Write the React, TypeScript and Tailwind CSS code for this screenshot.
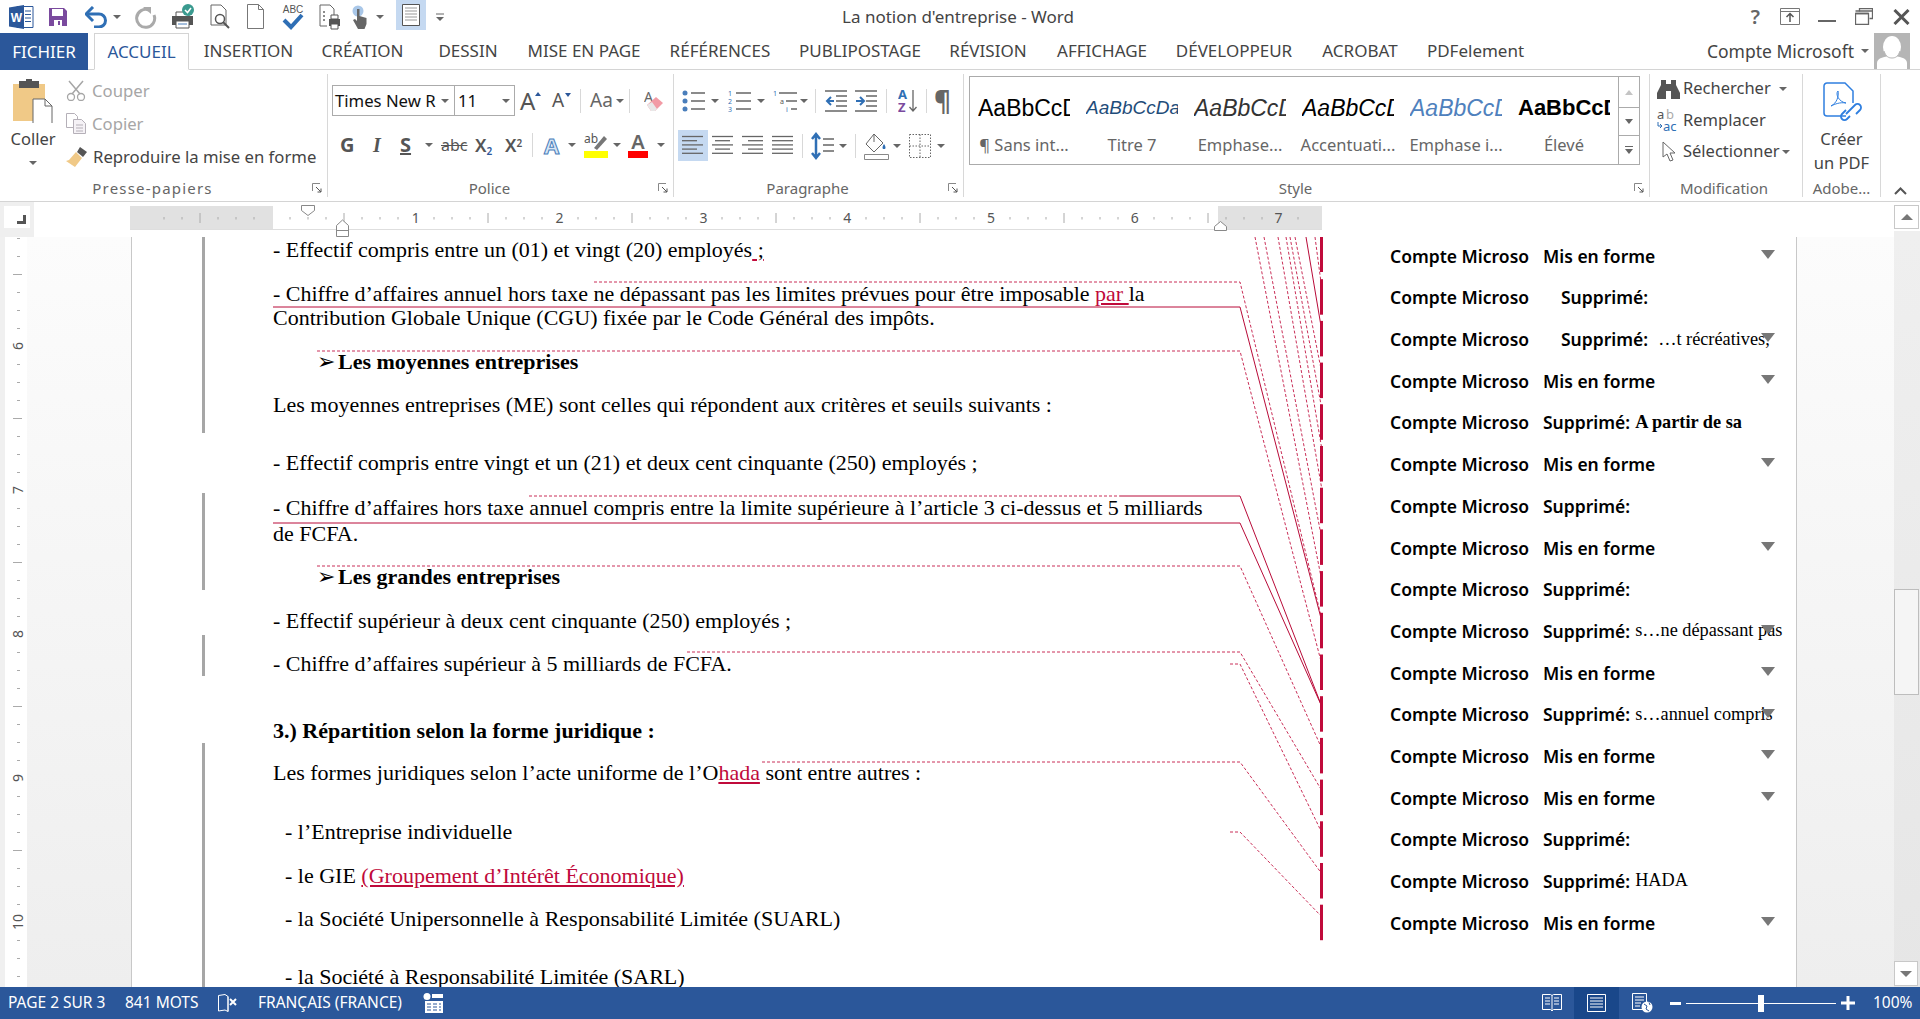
import type { ReactNode } from "react";

const RED = "#c00a3b";

function Caret({ className = "" }: { className?: string }) {
	return <span className={`inline-block w-0 h-0 border-x-[4px] border-t-[4px] border-x-transparent border-t-[#666] ${className}`} />;
}

function Launcher() {
	return (
		<svg width="11" height="11" viewBox="0 0 11 11" className="justify-self-end">
			<path d="M.5 8V.5H8" fill="none" stroke="#888" />
			<path d="M4 4l5 5M9 5.5V9H5.5" fill="none" stroke="#555" />
		</svg>
	);
}

function GroupLabel({ text, launcher = true, cls = "" }: { text: string; launcher?: boolean; cls?: string }) {
	return (
		<div className="grid grid-cols-[1fr_auto_1fr] items-center h-[24px] pb-[2px] text-[15px] text-[#666] pr-[4px]">
			<span />
			<span className={`${launcher ? "mr-[18px]" : ""} ${cls}`}>{text}</span>
			{launcher ? <Launcher /> : <span />}
		</div>
	);
}

function Sep() {
	return <div className="w-px shrink-0 my-[4px] bg-[#d8d8d8]" />;
}

function MiniSep({ className = "" }: { className?: string }) {
	return <div className={`w-px h-[24px] bg-[#d8d8d8] ${className}`} />;
}

function AlignIcon({ lines }: { lines: [number, number][] }) {
	return (
		<svg width="22" height="24" viewBox="0 0 22 24">
			{lines.map(([a, b], i) => (
				<path key={i} d={`M${a} ${2.5 + i * 4.2}H${b}`} stroke="#666" strokeWidth="1.3" />
			))}
		</svg>
	);
}

function QuickAccess() {
	return (
		<div className="flex items-center h-[33px]">
			<svg width="25" height="26" viewBox="0 0 25 26" className="ml-[9px]">
				<path d="M8 2.5h16v21H8z" fill="#fff" stroke="#2b579a" />
				<path d="M16 7h6M16 10.5h6M16 14h6M16 17.5h6" stroke="#2b579a" />
				<path d="M0 3.5 15 1v24L0 22.5z" fill="#2b579a" />
				<text x="7.5" y="17.5" fontSize="12" fontWeight="700" fill="#fff" textAnchor="middle" fontFamily="Liberation Sans">W</text>
			</svg>
			<svg width="20" height="20" viewBox="0 0 20 20" className="ml-[14px]">
				<path d="M1 1h15l3 3v15H1z" fill="#7a4a9e" />
				<path d="M4 2h11v7H4z" fill="#fff" />
				<path d="M6 13h8v6H6z" fill="#fff" />
				<path d="M10 14h2v4h-2z" fill="#7a4a9e" />
			</svg>
			<svg width="23" height="22" viewBox="0 0 23 22" className="ml-[17px]">
				<path d="M3 8h11a6.5 6.5 0 0 1 0 13h-5" fill="none" stroke="#2f6fb5" strokeWidth="3" />
				<path d="M8 1 1 8l7 7" fill="none" stroke="#2f6fb5" strokeWidth="3" />
			</svg>
			<Caret className="ml-[5px]" />
			<svg width="22" height="24" viewBox="0 0 22 24" className="ml-[14px]">
				<path d="M14 5a9 9 0 1 0 5 5" fill="none" stroke="#aaa" strokeWidth="3" />
				<path d="M8 2h8v7z" fill="#aaa" />
			</svg>
			<svg width="24" height="26" viewBox="0 0 24 26" className="ml-[14px]">
				<path d="M5 8h13v6H5z" fill="#fff" stroke="#555" />
				<path d="M1 12h21v9H1z" fill="#555" />
				<path d="M5 17h13v7H5z" fill="#fff" stroke="#555" />
				<path d="M7 20h9" stroke="#4a7ebb" />
				<circle cx="17" cy="6" r="6" fill="#3a9a8f" />
				<path d="M14 6l2.500 2.500L20 4" fill="none" stroke="#fff" strokeWidth="1.500" />
			</svg>
			<svg width="21" height="26" viewBox="0 0 21 26" className="ml-[15px]">
				<path d="M1 1h10l5 5v15H1z" fill="#fff" stroke="#666" />
				<circle cx="10" cy="15" r="4.500" fill="#fff" stroke="#555" strokeWidth="1.500" />
				<path d="M13 18l6 6" stroke="#555" strokeWidth="2" />
			</svg>
			<svg width="17" height="25" viewBox="0 0 17 25" className="ml-[16px]">
				<path d="M.5.5h11l5 5v19H.500z" fill="#fff" stroke="#777" />
				<path d="M11.500.5v5h5" fill="none" stroke="#777" />
			</svg>
			<svg width="22" height="26" viewBox="0 0 22 26" className="ml-[18px]">
				<text x="11" y="9" fontSize="10" fill="#555" textAnchor="middle" fontFamily="Liberation Sans">ABC</text>
				<path d="M2 16l7 7L20 11" fill="none" stroke="#2f6fb5" strokeWidth="4" />
			</svg>
			<svg width="23" height="26" viewBox="0 0 23 26" className="ml-[15px]">
				<path d="M1 1h10l4 4v8M1 1v21h7" fill="#fff" stroke="#666" />
				<path d="M4 8h2M4 12h2M4 16h2" stroke="#666" strokeWidth="1.500" />
				<path d="M10 15h11v7H10z" fill="#555" />
				<path d="M12 11h7v4h-7zM12 20h7v5h-7z" fill="#fff" stroke="#555" />
			</svg>
			<svg width="18" height="26" viewBox="0 0 18 26" className="ml-[10px]">
				<circle cx="6" cy="7" r="5.500" fill="#a9c7e8" />
				<path d="M5 5h2.500v7l7 2v6l-2 5H6l-5-9 2-1 2 2z" fill="#666" />
			</svg>
			<Caret className="ml-[6px]" />
			<div className="self-start ml-[12px] w-[30px] h-[30px] bg-[#c5d9f1] flex items-center justify-center">
				<svg width="18" height="22" viewBox="0 0 18 22">
					<path d="M.5.5h17v21H.5z" fill="#fff" stroke="#555" />
					<path d="M3 4h12M3 7h12M3 10h12M3 13h12M3 16h12" stroke="#999" />
				</svg>
			</div>
			<svg width="8" height="8" viewBox="0 0 8 8" className="ml-[10px]">
				<path d="M0 1h8" stroke="#666" />
				<path d="M0 4h8L4 8z" fill="#666" />
			</svg>
		</div>
	);
}

function WindowControls() {
	return (
		<div className="flex items-center justify-end h-[33px] pr-[10px]">
			<span className="text-[20px] font-semibold text-[#666] mr-[20px] leading-none">?</span>
			<svg width="20" height="17" viewBox="0 0 20 17" className="mr-[18px]">
				<path d="M.5.5h19v16H.5zM.5 3.500h19" fill="none" stroke="#777" />
				<path d="M10 14V6M6.500 9 10 5.500 13.500 9" fill="none" stroke="#555" strokeWidth="1.500" />
			</svg>
			<div className="w-[18px] h-[2px] bg-[#666] mt-[8px] mr-[19px]" />
			<svg width="18" height="17" viewBox="0 0 18 17" className="mr-[20px]">
				<path d="M4.500 3.500V.5h13v10h-3" fill="none" stroke="#666" strokeWidth="1.300" />
				<path d="M.5 5.500h13v11H.5z" fill="#fff" stroke="#666" strokeWidth="1.300" />
				<path d="M.5 3h17M.5 5.500h13" stroke="#666" strokeWidth="1.300" />
			</svg>
			<svg width="17" height="16" viewBox="0 0 17 16">
				<path d="M1.500 1l14 14M15.500 1l-14 14" stroke="#555" strokeWidth="3" />
			</svg>
		</div>
	);
}

function TabRow() {
	return (
		<div className="flex h-[37px] border-b border-[#d4d4d4] text-[17px] text-[#444] relative">
			<div className="w-[88px] h-[37px] bg-[#2b579a] text-white flex items-center justify-center shrink-0">FICHIER</div>
			<div className="ml-[6px] w-[95px] h-[37px] border border-b-white border-[#d4d4d4] bg-white text-[#2b579a] flex items-center justify-center shrink-0">ACCUEIL</div>
			<div className="w-[119px] flex items-center justify-center">INSERTION</div>
			<div className="w-[109px] flex items-center justify-center">CRÉATION</div>
			<div className="w-[102px] flex items-center justify-center">DESSIN</div>
			<div className="w-[130px] flex items-center justify-center whitespace-nowrap">MISE EN PAGE</div>
			<div className="w-[142px] flex items-center justify-center">RÉFÉRENCES</div>
			<div className="w-[138px] flex items-center justify-center">PUBLIPOSTAGE</div>
			<div className="w-[118px] flex items-center justify-center">RÉVISION</div>
			<div className="w-[110px] flex items-center justify-center">AFFICHAGE</div>
			<div className="w-[154px] flex items-center justify-center">DÉVELOPPEUR</div>
			<div className="w-[98px] flex items-center justify-center">ACROBAT</div>
			<div className="w-[133px] flex items-center justify-center">PDFelement</div>
			<div className="flex-1 flex items-center justify-end">
				<span className="text-[17.500px] whitespace-nowrap">Compte Microsoft</span>
				<Caret className="ml-[7px]" />
				<div className="ml-[5px] mr-[10px] w-[36px] h-[36px] bg-[#b5b5b5] overflow-hidden">
					<svg width="36" height="36" viewBox="0 0 36 36">
						<ellipse cx="18" cy="14" rx="9" ry="11" fill="#fff" />
						<path d="M3 36v-6c0-5 8-7 15-7s15 2 15 7v6z" fill="#fff" />
						<path d="M10 18c2 6 5 7 8 7s6-1 8-7" fill="none" stroke="#b5b5b5" />
					</svg>
				</div>
			</div>
		</div>
	);
}

function Clipboard() {
	return (
		<div className="w-[327px] shrink-0 flex flex-col">
			<div className="flex-1 flex">
				<div className="w-[66px] flex flex-col items-center text-[16.500px] text-[#444] pt-[9px]">
					<svg width="42" height="44" viewBox="0 0 42 44">
						<path d="M1 5h32v37H1z" fill="#f0c987" />
						<path d="M7 2h20v7H7z" fill="#555" />
						<path d="M14 0h6v3h-6z" fill="#555" />
						<path d="M21 20h12l7 7v23H21z" fill="#fff" stroke="#666" />
						<path d="M33 20v7h7" fill="none" stroke="#666" />
					</svg>
					<span className="mt-[4px]">Coller</span>
					<Caret className="mt-[9px]" />
				</div>
				<div className="flex flex-col pt-[4px] text-[16.700px]">
					<div className="flex items-center h-[33px] text-[#a6a6a6]">
						<svg width="20" height="21" viewBox="0 0 20 21" className="mr-[6px]">
							<path d="M3 1l11 13M17 1 6 14" stroke="#a6a6a6" strokeWidth="1.500" />
							<circle cx="5" cy="17" r="3.500" fill="none" stroke="#a6a6a6" strokeWidth="1.300" />
							<circle cx="15" cy="17" r="3.500" fill="none" stroke="#a6a6a6" strokeWidth="1.300" />
						</svg>
						Couper
					</div>
					<div className="flex items-center h-[33px] text-[#a6a6a6]">
						<svg width="20" height="21" viewBox="0 0 20 21" className="mr-[6px]">
							<path d="M.5.5h8l3 3v11H.5z" fill="#fff" stroke="#b5b0b8" />
							<path d="M7.500 6.500h8l4 4v10h-12z" fill="#f5f2f6" stroke="#b5b0b8" />
							<path d="M10 12h7M10 15h7M10 18h7" stroke="#b5b0b8" />
						</svg>
						Copier
					</div>
					<div className="flex items-center h-[33px] text-[#444] whitespace-nowrap">
						<svg width="23" height="21" viewBox="0 0 23 21" className="mr-[4px]">
							<path d="M14 1l7 5-4 5-6-5z" fill="#555" />
							<path d="M10 6l6 6-7 9-9-6 3-1z" fill="#f0c987" />
						</svg>
						Reproduire la mise en forme
					</div>
				</div>
			</div>
			<GroupLabel text="Presse-papiers" cls="tracking-[1.200px]" />
		</div>
	);
}

function Police() {
	return (
		<div className="w-[345px] shrink-0 flex flex-col">
			<div className="flex-1 pt-[15px]">
				<div className="flex items-center h-[31px] pl-[4px]">
					<div className="w-[123px] h-[31px] border border-[#ababab] flex items-center pl-[2px] pr-[5px] justify-between text-[16.700px] text-[#111] whitespace-nowrap overflow-hidden">
						Times New R
						<Caret />
					</div>
					<div className="w-[61px] ml-[-1px] h-[31px] border border-[#ababab] flex items-center pl-[3px] pr-[4px] justify-between text-[16.700px] text-[#111]">
						11
						<Caret />
					</div>
					<span className="ml-[5px] w-[32px] text-[24px] leading-none text-[#555] relative">
						A
						<span className="absolute left-[15px] top-[3px] w-0 h-0 border-x-[3px] border-b-[4px] border-x-transparent border-b-[#2b579a]" />
					</span>
					<span className="w-[28px] text-[19px] leading-none text-[#555] relative">
						A
						<span className="absolute left-[13px] top-[2px] w-0 h-0 border-x-[3px] border-t-[4px] border-x-transparent border-t-[#2b579a]" />
					</span>
					<MiniSep />
					<span className="ml-[9px] text-[19px] text-[#666]">Aa</span>
					<Caret className="ml-[3px]" />
					<MiniSep className="ml-[5px]" />
					<svg width="20" height="22" viewBox="0 0 20 22" className="ml-[14px]">
						<text x="0" y="12" fontSize="14" fill="#666" fontFamily="Noto Sans">A</text>
						<path d="M3 15 12 7l7 6-8 8H7z" fill="#f29ba5" />
						<path d="M3 15l4 6h4l2-2-5-7z" fill="#e8e8e8" />
					</svg>
				</div>
				<div className="flex items-center h-[30px] pl-[12px] mt-[14px] text-[#555]">
					<span className="w-[32px] text-[20px] font-bold leading-none">G</span>
					<span className="w-[28px] text-[20px] font-bold italic leading-none pl-[1px] [font-family:'Liberation_Serif',serif]">I</span>
					<span className="w-[25px] text-[20px] font-bold underline leading-none">S</span>
					<Caret className="mr-[8px]" />
					<span className="w-[34px] text-[16px] line-through leading-none">abc</span>
					<span className="w-[30px] text-[18px] font-semibold leading-none">X<sub className="text-[10px] text-[#2b579a]">2</sub></span>
					<span className="w-[27px] text-[18px] font-semibold leading-none">X<sup className="text-[10px]">2</sup></span>
					<MiniSep className="mr-[11px]" />
					<span className="w-[24px] text-[22px] leading-none text-[#d7e6f5] [-webkit-text-stroke:1px_#4a7ebb] font-bold">A</span>
					<Caret className="mr-[8px]" />
					<div className="w-[24px] flex flex-col items-center">
						<svg width="24" height="18" viewBox="0 0 24 18">
							<text x="0" y="10" fontSize="12" fill="#555" fontFamily="Noto Sans">ab</text>
							<path d="M10 15l10-12 3 3-10 11z" fill="#777" />
						</svg>
						<div className="w-[24px] h-[7px] bg-[#ffff00]" />
					</div>
					<Caret className="ml-[5px] mr-[7px]" />
					<div className="w-[20px] flex flex-col items-center">
						<span className="text-[20px] font-semibold leading-[18px] text-[#666]">A</span>
						<div className="w-[20px] h-[7px] bg-[#ff0000]" />
					</div>
					<Caret className="ml-[9px]" />
				</div>
			</div>
			<GroupLabel text="Police" />
		</div>
	);
}

function Paragraph() {
	return (
		<div className="w-[289px] shrink-0 flex flex-col">
			<div className="flex-1 pt-[17px]">
				<div className="flex items-center h-[28px]">
					<svg width="24" height="24" viewBox="0 0 24 24" className="ml-[8px]">
						<circle cx="3" cy="4" r="2.500" fill="#4a7ebb" />
						<circle cx="3" cy="12" r="2.500" fill="#4a7ebb" />
						<circle cx="3" cy="20" r="2.500" fill="#4a7ebb" />
						<path d="M9 4h14M9 12h14M9 20h14" stroke="#666" strokeWidth="1.300" />
					</svg>
					<Caret className="ml-[5px]" />
					<svg width="24" height="24" viewBox="0 0 24 24" className="ml-[9px]">
						<text x="0" y="7" fontSize="7" fill="#2f6fb5" fontFamily="Noto Sans">1</text>
						<text x="0" y="15" fontSize="7" fill="#2f6fb5" fontFamily="Noto Sans">2</text>
						<text x="0" y="23" fontSize="7" fill="#2f6fb5" fontFamily="Noto Sans">3</text>
						<path d="M8 4h15M8 12h15M8 20h15" stroke="#666" strokeWidth="1.300" />
					</svg>
					<Caret className="ml-[5px]" />
					<svg width="25" height="24" viewBox="0 0 25 24" className="ml-[8px]">
						<text x="0" y="7" fontSize="7" fill="#2f6fb5" fontFamily="Noto Sans">1</text>
						<text x="7" y="15" fontSize="7" fill="#555" fontFamily="Noto Sans">a</text>
						<text x="13" y="23" fontSize="7" fill="#2f6fb5" fontFamily="Noto Sans">i</text>
						<path d="M6 4h18M13 12h11M18 20h6" stroke="#666" strokeWidth="1.300" />
					</svg>
					<Caret className="ml-[2px]" />
					<MiniSep className="ml-[7px]" />
					<svg width="23" height="24" viewBox="0 0 23 24" className="ml-[9px]">
						<path d="M0 2h22M11 7h11M11 12h11M11 17h11M0 22h22" stroke="#666" strokeWidth="1.300" />
						<path d="M9 12H2M6 8l-4 4 4 4" fill="none" stroke="#2f6fb5" strokeWidth="2" />
					</svg>
					<svg width="23" height="24" viewBox="0 0 23 24" className="ml-[7px]">
						<path d="M0 2h22M11 7h11M11 12h11M11 17h11M0 22h22" stroke="#666" strokeWidth="1.300" />
						<path d="M1 12h7M5 8l4 4-4 4" fill="none" stroke="#2f6fb5" strokeWidth="2" />
					</svg>
					<MiniSep className="ml-[8px]" />
					<svg width="20" height="26" viewBox="0 0 20 26" className="ml-[11px]">
						<text x="0" y="11" fontSize="13" fontWeight="700" fill="#2f6fb5" fontFamily="Noto Sans">A</text>
						<text x="0" y="24" fontSize="13" fontWeight="700" fill="#7a4a9e" fontFamily="Noto Sans">Z</text>
						<path d="M15 2v21M11.500 19l3.500 4 3.500-4" fill="none" stroke="#666" strokeWidth="1.300" />
					</svg>
					<MiniSep className="ml-[8px]" />
					<span className="ml-[7px] text-[26px] font-bold leading-none text-[#666]">¶</span>
				</div>
				<div className="flex items-center h-[31px] mt-[15px] pl-[4px]">
					<div className="w-[30px] h-[31px] bg-[#c5d9f1] flex items-center justify-center">
						<AlignIcon lines={[[0, 21], [0, 15], [0, 21], [0, 15], [0, 21]]} />
					</div>
					<div className="ml-[4px]"><AlignIcon lines={[[0, 21], [3, 18], [0, 21], [3, 18], [0, 21]]} /></div>
					<div className="ml-[8px]"><AlignIcon lines={[[0, 21], [6, 21], [0, 21], [6, 21], [0, 21]]} /></div>
					<div className="ml-[8px]"><AlignIcon lines={[[0, 21], [0, 21], [0, 21], [0, 21], [0, 21]]} /></div>
					<MiniSep className="ml-[8px]" />
					<svg width="24" height="28" viewBox="0 0 24 28" className="ml-[8px]">
						<path d="M5 3v22M1 7l4-5 4 5M1 21l4 5 4-5" fill="none" stroke="#2f6fb5" strokeWidth="2.500" />
						<path d="M12 7h11M12 13h11M12 19h11" stroke="#666" strokeWidth="1.300" />
					</svg>
					<Caret className="ml-[4px]" />
					<MiniSep className="ml-[8px]" />
					<svg width="25" height="28" viewBox="0 0 25 28" className="ml-[8px]">
						<path d="M10 2 2 12l8 8 9-9z" fill="#fff" stroke="#666" />
						<path d="M10 2v8" stroke="#666" />
						<path d="M20 12c-2 3-2 5 0 5s2-2 0-5z" fill="#2f6fb5" />
						<path d="M.5 22.500h24v5H.5z" fill="#fff" stroke="#888" />
					</svg>
					<Caret className="ml-[4px]" />
					<svg width="22" height="24" viewBox="0 0 22 24" className="ml-[8px]">
						<path d="M.5.5h21v23H.5zM11 .5v23M.5 12h21" fill="none" stroke="#666" strokeDasharray="1.500 1.500" />
					</svg>
					<Caret className="ml-[6px]" />
				</div>
			</div>
			<GroupLabel text="Paragraphe" />
		</div>
	);
}

function StyleCell({ sample, label, cls }: { sample: string; label: string; cls: string }) {
	return (
		<div className="w-[108px] flex flex-col items-center">
			<div className={`w-[92px] h-[30px] mt-[16px] overflow-hidden whitespace-nowrap leading-[30px] [font-family:'Liberation_Sans',sans-serif] ${cls}`}>{sample}</div>
			<div className="mt-[10px] text-[16.500px] text-[#666] whitespace-nowrap">{label}</div>
		</div>
	);
}

function Styles() {
	return (
		<div className="w-[685px] shrink-0 flex flex-col">
			<div className="flex-1 pt-[6px] pl-[5px]">
				<div className="w-[671px] h-[89px] border border-[#ababab] flex">
					<StyleCell sample="AaBbCcDc" label="¶ Sans int..." cls="text-[23px] text-black" />
					<StyleCell sample="AaBbCcDa" label="Titre 7" cls="text-[19px] italic text-[#1f4d7a] text-center" />
					<StyleCell sample="AaBbCcDc" label="Emphase..." cls="text-[23px] italic text-[#333]" />
					<StyleCell sample="AaBbCcDc" label="Accentuati..." cls="text-[23px] italic text-black" />
					<StyleCell sample="AaBbCcDc" label="Emphase i..." cls="text-[23px] italic text-[#4f81bd]" />
					<StyleCell sample="AaBbCcDc" label="Élevé" cls="text-[22px] font-bold text-black" />
					<div className="w-[21px] ml-auto flex flex-col border-l border-[#ababab] shrink-0">
						<div className="h-[31px] border-b border-[#ababab] flex items-center justify-center">
							<span className="w-0 h-0 border-x-[4px] border-b-[5px] border-x-transparent border-b-[#c4c4c4]" />
						</div>
						<div className="h-[28px] border-b border-[#ababab] flex items-center justify-center">
							<span className="w-0 h-0 border-x-[4px] border-t-[5px] border-x-transparent border-t-[#666]" />
						</div>
						<div className="flex-1 flex flex-col items-center justify-center gap-[2px]">
							<span className="w-[8px] h-px bg-[#666]" />
							<span className="w-0 h-0 border-x-[4px] border-t-[5px] border-x-transparent border-t-[#666]" />
						</div>
					</div>
				</div>
			</div>
			<GroupLabel text="Style" />
		</div>
	);
}

function Modification() {
	return (
		<div className="w-[152px] shrink-0 flex flex-col">
			<div className="flex-1 pt-[3px] pl-[7px] text-[16.500px] text-[#444]">
				<div className="flex items-center h-[31px]">
					<svg width="23" height="20" viewBox="0 0 23 20" className="mr-[3px]">
						<path d="M4 1h5v4h5V1h5v5l4 8v6h-9v-8h-5v8H0v-6l4-8z" fill="#555" />
					</svg>
					Rechercher
					<Caret className="ml-[8px]" />
				</div>
				<div className="flex items-center h-[32px]">
					<svg width="23" height="24" viewBox="0 0 23 24" className="mr-[3px]">
						<text x="0" y="11" fontSize="13" fill="#555" fontFamily="Noto Sans">a</text>
						<text x="9" y="11" fontSize="13" fill="#aaa" fontFamily="Noto Sans">b</text>
						<text x="6" y="23" fontSize="13" fill="#2f6fb5" fontFamily="Noto Sans">ac</text>
						<path d="M1 14v4h4M3 16l2 2-2 2" fill="none" stroke="#2f6fb5" />
					</svg>
					Remplacer
				</div>
				<div className="flex items-center h-[31px]">
					<svg width="18" height="22" viewBox="0 0 18 22" className="ml-[5px] mr-[3px]">
						<path d="M1 1v15l4-3 3 7 3-1-3-7h5z" fill="#fff" stroke="#666" />
					</svg>
					Sélectionner
					<Caret className="ml-[2px]" />
				</div>
			</div>
			<GroupLabel text="Modification" launcher={false} />
		</div>
	);
}

function Adobe() {
	return (
		<div className="w-[77px] shrink-0 flex flex-col items-center text-[16.500px] text-[#444]">
			<div className="flex-1 flex flex-col items-center pt-[12px]">
				<svg width="40" height="42" viewBox="0 0 40 42">
					<path d="M24 34H5a3 3 0 0 1-3-3V4a3 3 0 0 1 3-3h18l8 8v12" fill="none" stroke="#2f7fe0" strokeWidth="1.500" />
					<path d="M9 24c6-3 8-10 7-15-3 3 1 11 8 12-6-1-11 1-15 3z" fill="none" stroke="#2f7fe0" />
					<path d="M24 32l9-9a3.500 3.500 0 0 1 5 5l-4 4M28 34l-3 3a3.500 3.500 0 0 1-5-5l4-4" fill="none" stroke="#2f7fe0" strokeWidth="1.800" />
				</svg>
				<span className="mt-[3px] leading-[24px]">Créer</span>
				<span className="leading-[24px]">un PDF</span>
			</div>
			<div className="h-[24px] pb-[2px] text-[15px] text-[#666] flex items-center whitespace-nowrap">Adobe...</div>
		</div>
	);
}

function HorizontalRuler() {
	const ticks: ReactNode[] = [];
	for (let n = -6; n <= 57; n++) {
		const x = 272 + n * 18;
		if (n % 8 === 0) continue;
		const long = n % 4 === 0;
		ticks.push(<path key={n} d={`M${x} ${long ? 213 : 217}V${long ? 223 : 219.5}`} stroke="#aaa" />);
	}
	return (
		<svg width="1192" height="36" viewBox="130 201 1192 36" className="shrink-0">
			<rect x="130" y="205" width="1192" height="24" fill="#fff" />
			<rect x="130" y="206" width="143" height="23" fill="#e1e1e1" />
			<rect x="1218" y="206" width="104" height="23" fill="#e1e1e1" />
			<path d="M130 229.500H1322" stroke="#dedede" />
			{ticks}
			{[1, 2, 3, 4, 5, 6, 7].map((n) => (
				<text key={n} x={272 + n * 143.800} y="223" fontSize="14" fill="#555" textAnchor="middle" fontFamily="Noto Sans">{n}</text>
			))}
			<path d="M301.500 205.500h13v5l-6.500 5-6.500-5z" fill="#fff" stroke="#888" />
			<path d="M336.500 236.500v-11l6-5.500 6 5.500v11zM336.500 230.500h12" fill="#fff" stroke="#888" />
			<path d="M1214.500 230.500v-4l6-5 6 5v4z" fill="#fff" stroke="#888" />
		</svg>
	);
}

function VerticalRuler() {
	const ticks: ReactNode[] = [];
	for (let n = 0; n < 42; n++) {
		const y = 238 + n * 18;
		const m = (n - 6) % 8;
		if (m === 0) continue;
		const long = (n - 2) % 8 === 0;
		ticks.push(<path key={n} d={`M${long ? 13 : 17} ${y + 0.5}H${long ? 22 : 20}`} stroke="#aaa" />);
	}
	return (
		<svg width="27" height="750" viewBox="0 237 27 750" className="shrink-0">
			<rect x="5" y="237" width="22" height="750" fill="#fff" />
			{ticks}
			{[6, 7, 8, 9, 10].map((n) => {
				const y = 346 + (n - 6) * 144;
				return (
					<text key={n} x="17" y={y} fontSize="14" fill="#555" textAnchor="middle" dominantBaseline="central" transform={`rotate(-90 17 ${y})`} fontFamily="Noto Sans">{n}</text>
				);
			})}
		</svg>
	);
}

const dashed: string[] = [
	"M594 282H1240L1322 620",
	"M317 351H1240L1322 665",
	"M529 496H1120",
	"M317 566H1240L1322 749",
	"M687 652H1240L1322 791",
	"M1230 664H1240L1322 833",
	"M762 762H1240L1322 874",
	"M1230 832H1240L1322 917",
	"M1255 237L1322 582",
	"M1264 237L1322 540",
	"M1278 237L1322 490",
	"M1286 237L1322 450",
	"M1290 237L1322 410",
	"M1295 237L1322 374",
	"M1315 237L1322 290",
	"M1321 237L1322 249",
];

const solid: string[] = [
	"M273 307H1240L1322 622",
	"M1120 496H1240L1322 707",
	"M273 523H1240L1322 707",
	"M1306 237L1322 332",
];

function RevisionMarks() {
	return (
		<svg width="1191" height="750" viewBox="132 237 1191 750" className="absolute left-0 top-0 pointer-events-none">
			{[[237, 433], [493, 590], [635, 676], [743, 987]].map(([a, b]) => (
				<rect key={a} x="202" y={a} width="3" height={b - a} fill="#a6a6a6" />
			))}
			{dashed.map((d) => (
				<path key={d} d={d} fill="none" stroke={RED} strokeDasharray="3 2" strokeOpacity="0.85" />
			))}
			{solid.map((d) => (
				<path key={d} d={d} fill="none" stroke="#b80a38" />
			))}
			{Array.from({ length: 17 }, (_, i) => (
				<rect key={i} x="1320" y={237.500 + i * 41.700 - (i === 0 ? 1 : 0)} width="3" height="35.500" fill={RED} />
			))}
		</svg>
	);
}

function Doc() {
	return (
		<div className="pl-[141px] pt-[1px] text-[22px] leading-[24px] text-black whitespace-nowrap [font-family:'Liberation_Serif',serif]">
			<div>- Effectif compris entre un (01) et vingt (20) employés<span className="underline decoration-[#c00a3b]"> ;</span></div>
			<div className="mt-[20px]">- Chiffre d’affaires annuel hors taxe ne dépassant pas les limites prévues pour être imposable <span className="text-[#c00a3b] underline">par </span>la</div>
			<div>Contribution Globale Unique (CGU) fixée par le Code Général des impôts.</div>
			<div className="mt-[20px] ml-[44px] font-bold flex items-center">
				<span className="w-[21px] text-[22px] [font-family:'DejaVu_Sans',sans-serif]">➢</span>
				Les moyennes entreprises
			</div>
			<div className="mt-[19px]">Les moyennes entreprises (ME) sont celles qui répondent aux critères et seuils suivants :</div>
			<div className="mt-[34px]">- Effectif compris entre vingt et un (21) et deux cent cinquante (250) employés ;</div>
			<div className="mt-[21px]">- Chiffre d’affaires hors taxe annuel compris entre la limite supérieure à l’article 3 ci-dessus et 5 milliards</div>
			<div className="mt-[2px]">de FCFA.</div>
			<div className="mt-[19px] ml-[44px] font-bold flex items-center">
				<span className="w-[21px] text-[22px] [font-family:'DejaVu_Sans',sans-serif]">➢</span>
				Les grandes entreprises
			</div>
			<div className="mt-[20px]">- Effectif supérieur à deux cent cinquante (250) employés ;</div>
			<div className="mt-[19px]">- Chiffre d’affaires supérieur à 5 milliards de FCFA.</div>
			<div className="mt-[43px] font-bold">3.) Répartition selon la forme juridique :</div>
			<div className="mt-[18px]">Les formes juridiques selon l’acte uniforme de l’O<span className="text-[#c00a3b] underline">hada</span> sont entre autres :</div>
			<div className="mt-[35px] ml-[12px]">- l’Entreprise individuelle</div>
			<div className="mt-[20px] ml-[12px]">- le GIE <span className="text-[#c00a3b] underline">(Groupement d’Intérêt Économique)</span></div>
			<div className="mt-[19px] ml-[12px]">- la Société Unipersonnelle à Responsabilité Limitée (SUARL)</div>
			<div className="mt-[34px] ml-[12px]">- la Société à Responsabilité Limitée (SARL)</div>
		</div>
	);
}

type Balloon = { tag: string; indent?: boolean; text?: string; bold?: boolean; arrow?: boolean };

const BALLOONS: Balloon[] = [
	{ tag: "Mis en forme", arrow: true },
	{ tag: "Supprimé:", indent: true },
	{ tag: "Supprimé:", indent: true, text: "…t récréatives,", arrow: true },
	{ tag: "Mis en forme", arrow: true },
	{ tag: "Supprimé:", text: "A partir de sa", bold: true },
	{ tag: "Mis en forme", arrow: true },
	{ tag: "Supprimé:" },
	{ tag: "Mis en forme", arrow: true },
	{ tag: "Supprimé:" },
	{ tag: "Supprimé:", text: "s…ne dépassant pas", arrow: true },
	{ tag: "Mis en forme", arrow: true },
	{ tag: "Supprimé:", text: "s…annuel compris", arrow: true },
	{ tag: "Mis en forme", arrow: true },
	{ tag: "Mis en forme", arrow: true },
	{ tag: "Supprimé:" },
	{ tag: "Supprimé:", text: "HADA" },
	{ tag: "Mis en forme", arrow: true },
];

function Balloons() {
	return (
		<div className="w-[473px] shrink-0 mt-[-2px]">
			{BALLOONS.map((b, i) => (
				<div key={i} className="relative flex items-center h-[41.700px] pl-[67px] text-[17.500px] font-semibold text-black whitespace-nowrap">
					<span className="w-[153px]">Compte Microso</span>
					<span className={b.indent ? "ml-[18px]" : ""}>{b.tag}</span>
					{b.text ? (
						<span className={`text-[18.300px] [font-family:'Liberation_Serif',serif] ${b.indent ? "ml-[10px]" : "ml-[5px]"} ${b.bold ? "font-bold" : "font-normal"}`}>{b.text}</span>
					) : null}
					{b.arrow ? (
						<span className="absolute left-[438px] top-[15px] w-0 h-0 border-x-[7px] border-t-[9px] border-x-transparent border-t-[#777]" />
					) : null}
				</div>
			))}
		</div>
	);
}

function Scrollbar() {
	return (
		<div className="w-[26px] shrink-0 flex flex-col bg-gradient-to-b from-[#efefef] to-[#e6e6e6]">
			<div className="h-[352px]" />
			<div className="h-[106px] w-[25px] bg-[#f5f5f5] border border-[#bdbdbd]" />
			<div className="flex-1" />
			<div className="h-[25px] w-[24px] mb-[1px] bg-white border border-[#c8c8c8] flex items-center justify-center">
				<span className="w-0 h-0 border-x-[6px] border-t-[6px] border-x-transparent border-t-[#777]" />
			</div>
		</div>
	);
}

function StatusBar() {
	return (
		<div className="h-[32px] shrink-0 bg-[#2b579a] text-white text-[15.500px] flex items-center">
			<span className="ml-[8px] w-[117px] whitespace-nowrap">PAGE 2 SUR 3</span>
			<span className="w-[93px] whitespace-nowrap">841 MOTS</span>
			<svg width="20" height="20" viewBox="0 0 20 20">
				<path d="M.5 2.500 7 1.500l3 2v15l-3-1.500-6.500 1zM10 3.500V18.500" fill="none" stroke="#fff" />
				<path d="M12 6l6 6M18 6l-6 6" stroke="#fff" strokeWidth="2" />
			</svg>
			<span className="ml-[20px] w-[165px] whitespace-nowrap">FRANÇAIS (FRANCE)</span>
			<svg width="20" height="20" viewBox="0 0 20 20">
				<circle cx="4" cy="3.500" r="3.500" fill="#fff" />
				<path d="M9 1h11v4H9zM2 8h18v12H2z" fill="#fff" />
				<path d="M4 11h4M10 11h4M16 11h2M4 14h4M10 14h4M16 14h2M4 17h4M10 17h4M16 17h2" stroke="#2b579a" />
			</svg>
			<div className="flex-1" />
			<svg width="20" height="20" viewBox="0 0 20 20">
				<path d="M.5 1.500h8l1.500 1 1.500-1h8v15h-8l-1.500 1.500-1.500-1.500h-8zM10 2.500v15" fill="none" stroke="#fff" />
				<path d="M3 5h5M3 8h5M3 11h5M12 5h5M12 8h5M12 11h5" stroke="#fff" />
			</svg>
			<div className="ml-[12px] w-[45px] h-[32px] bg-[#19478a] flex items-center justify-center">
				<svg width="19" height="18" viewBox="0 0 19 18">
					<path d="M.5.5h18v17H.5z" fill="none" stroke="#fff" />
					<path d="M3 4h13M3 7h13M3 10h13M3 13h13" stroke="#fff" />
				</svg>
			</div>
			<svg width="21" height="20" viewBox="0 0 21 20" className="ml-[13px]">
				<path d="M.5.5h14v16H.5z" fill="none" stroke="#fff" />
				<path d="M3 4h9M3 7h9M3 10h6M3 13h5" stroke="#fff" />
				<circle cx="15" cy="14" r="5.500" fill="#fff" />
				<path d="M12 11l3 2-1 3 3 2M17 9.500l1 2.500" stroke="#2b579a" fill="none" />
			</svg>
			<div className="ml-[17px] w-[11px] h-[3px] bg-white" />
			<div className="ml-[5px] w-[150px] h-px bg-white relative">
				<div className="absolute left-[72px] top-[-8px] w-[6px] h-[17px] bg-white" />
			</div>
			<svg width="14" height="14" viewBox="0 0 14 14" className="ml-[5px]">
				<path d="M0 7h14M7 0v14" stroke="#fff" strokeWidth="3" />
			</svg>
			<span className="ml-[18px] w-[47px] whitespace-nowrap">100%</span>
		</div>
	);
}

export default function App() {
	return (
		<div className="w-[1920px] h-[1019px] flex flex-col overflow-hidden bg-white text-[#444] [font-family:'Noto_Sans',sans-serif]">
			<div className="grid grid-cols-[1fr_auto_1fr] h-[33px] shrink-0">
				<QuickAccess />
				<div className="flex items-center text-[17px] text-[#444] ml-[-4px]">La notion d'entreprise - Word</div>
				<WindowControls />
			</div>
			<TabRow />
			<div className="flex h-[132px] shrink-0 border-b border-[#d4d4d4]">
				<Clipboard />
				<Sep />
				<Police />
				<Sep />
				<Paragraph />
				<Sep />
				<Styles />
				<Sep />
				<Modification />
				<Sep />
				<Adobe />
				<Sep />
				<div className="flex-1 flex items-end justify-center pb-[6px]">
					<svg width="13" height="8" viewBox="0 0 13 8">
						<path d="M1 7l5.500-5.500L12 7" fill="none" stroke="#555" strokeWidth="2" />
					</svg>
				</div>
			</div>
			<div className="flex h-[35px] shrink-0">
				<div className="w-[34px] h-[35px] bg-[#efefef] flex items-center justify-center shrink-0">
					<div className="w-[26px] h-[22px] bg-white flex items-end justify-end pr-[4px] pb-[4px] mb-[5px]">
						<svg width="9" height="9" viewBox="0 0 9 9">
							<path d="M7.500 0v7.500H0" fill="none" stroke="#555" strokeWidth="3" />
						</svg>
					</div>
				</div>
				<div className="w-[96px] shrink-0" />
				<div className="mt-[-1px]"><HorizontalRuler /></div>
				<div className="flex-1" />
				<div className="w-[26px] shrink-0 flex flex-col">
					<div className="mt-[3px] h-[24px] w-[25px] bg-white border border-[#c8c8c8] flex items-center justify-center shrink-0">
						<span className="w-0 h-0 border-x-[6px] border-b-[6px] border-x-transparent border-b-[#777]" />
					</div>
					<div className="flex-1 mt-[2px] bg-[#efefef]" />
				</div>
			</div>
			<div className="flex-1 flex min-h-0 overflow-hidden">
				<div className="w-[27px] shrink-0 bg-[#f0f0f0]"><VerticalRuler /></div>
				<div className="w-[105px] shrink-0 bg-gradient-to-b from-[#fcfcfc] to-[#eeeeee] border-r border-[#c8c8c8]" />
				<div className="w-[1191px] shrink-0 relative overflow-hidden bg-white">
					<Doc />
					<RevisionMarks />
				</div>
				<Balloons />
				<div className="w-[98px] shrink-0 bg-gradient-to-b from-[#fcfcfc] to-[#eeeeee] border-l border-[#c8c8c8]" />
				<Scrollbar />
			</div>
			<StatusBar />
		</div>
	);
}
